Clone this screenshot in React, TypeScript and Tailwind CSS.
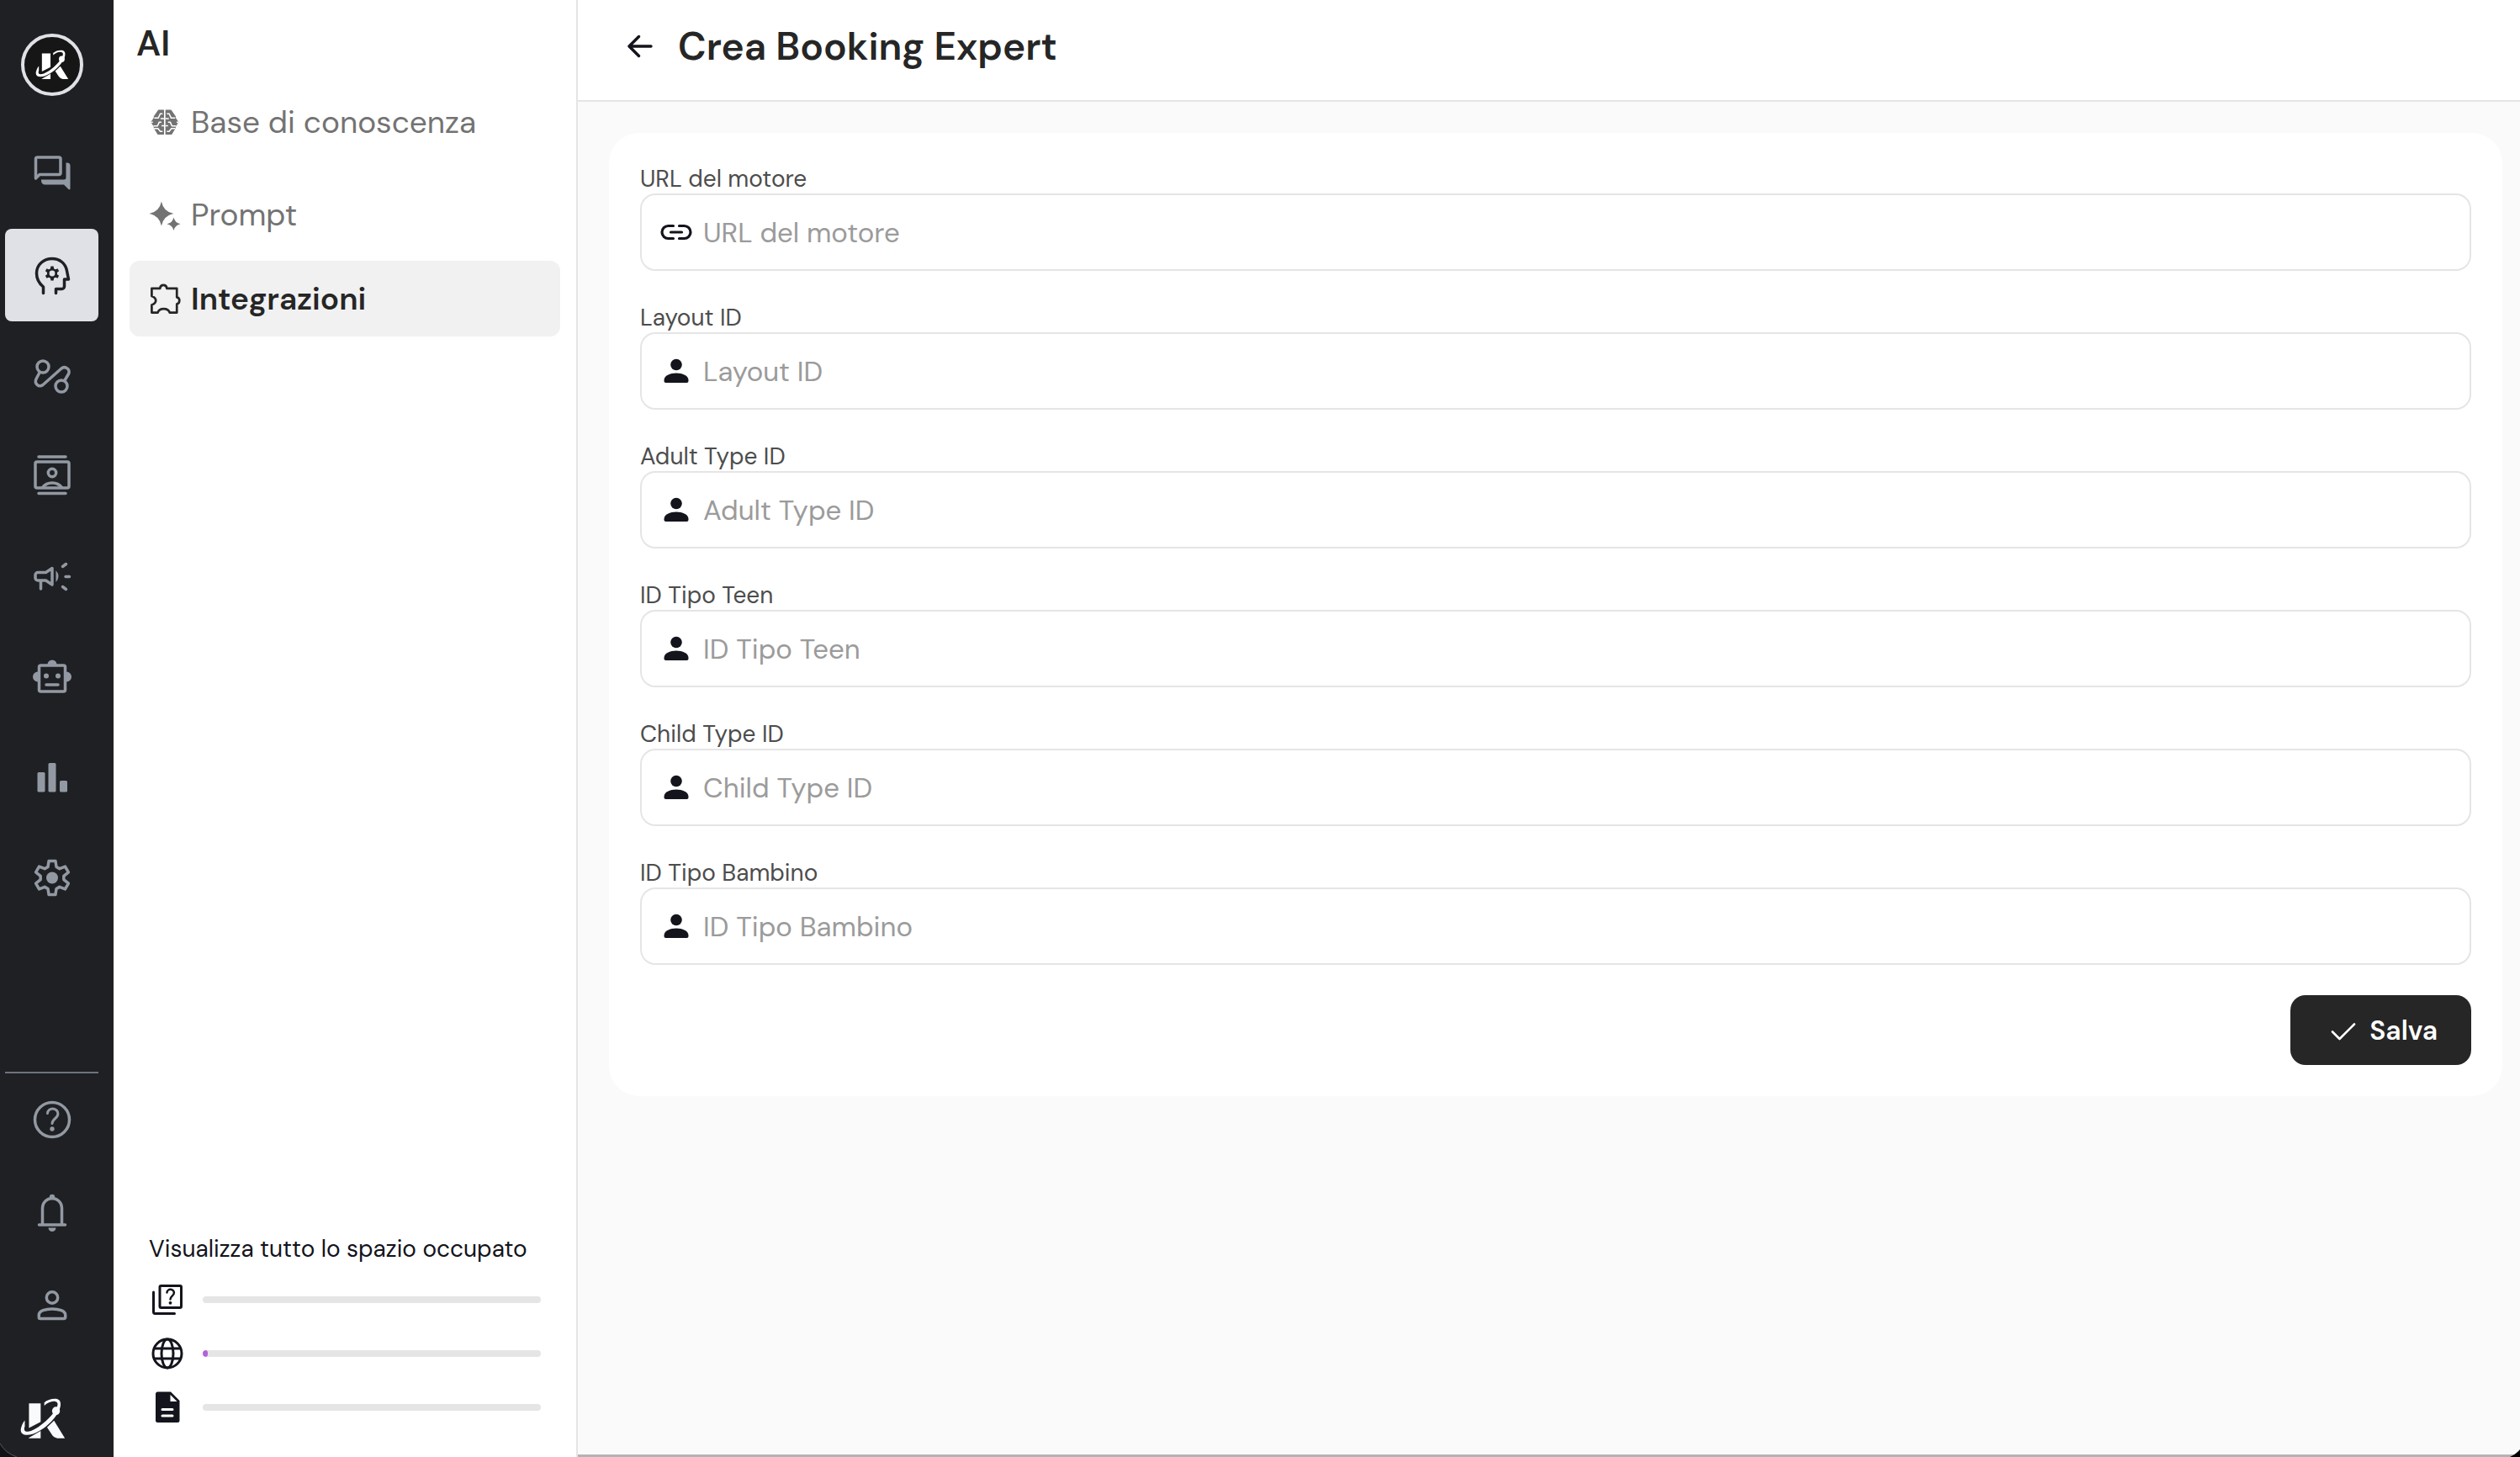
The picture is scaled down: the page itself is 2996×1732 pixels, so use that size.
import React, { useState } from "react";

type Art = { children: React.ReactNode };

/* Outline of a six-toothed cog centred on (cx, cy). */
function cogPath(cx: number, cy: number, outer: number, inner: number) {
  const points: string[] = [];
  for (let i = 0; i < 6; i++) {
    const mid = i * 60 - 90;
    const corners: [number, number][] = [
      [inner, mid - 21],
      [outer, mid - 11],
      [outer, mid + 11],
      [inner, mid + 21],
    ];
    for (const [radius, degrees] of corners) {
      const angle = (degrees * Math.PI) / 180;
      points.push(`${(cx + radius * Math.cos(angle)).toFixed(2)} ${(cy + radius * Math.sin(angle)).toFixed(2)}`);
    }
  }
  return `M${points.join("L")}Z`;
}

function RailIcon({ children }: Art) {
  return (
    <svg
      viewBox="0 0 56 56"
      className="size-14"
      fill="none"
      stroke="currentColor"
      strokeWidth="3.5"
      strokeLinecap="round"
      strokeLinejoin="round"
      aria-hidden="true"
    >
      {children}
    </svg>
  );
}

const chatIcon = (
  <RailIcon>
    <path d="M8.5 33V10a2 2 0 0 1 2-2h25.500a2 2 0 0 1 2 2v16.500a2 2 0 0 1-2 2H13z" />
    <path d="M44.500 14.500H46a3.500 3.500 0 0 1 3.500 3.500V45c0 1.500-1 1.800-2 1L42 40.500H19.500a4.500 4.500 0 0 1-4.500-4.500v-1.500H42a2.500 2.500 0 0 0 2.500-2.500z" fill="currentColor" stroke="none" />
  </RailIcon>
);

const mindIcon = (
  <RailIcon>
    <path d="M17.500 49.500V42C12 37.500 9.500 32.500 9.500 26C9.500 15.500 18 8.500 28 8.500C37 8.500 43.500 14 45.300 22L47.500 33H42.500V41.500a3 3 0 0 1-3 3H32.500V49.500" />
    <path d={cogPath(28, 26, 8.6, 5.8)} fill="currentColor" stroke="none" />
    <circle cx="28" cy="26" r="6" fill="currentColor" stroke="none" />
    <circle cx="28" cy="26" r="3.400" fill="#dfe1e6" stroke="none" />
  </RailIcon>
);

const routeIcon = (
  <RailIcon>
    <circle cx="17" cy="17" r="7" />
    <circle cx="39" cy="40" r="7" />
    <path d="M13 24L9 31.500C6.500 37 12 42 17 38.500L39 19C43.500 15.500 50 20 47.500 25.500L43 33" />
  </RailIcon>
);

const contactsIcon = (
  <RailIcon>
    <path d="M12 4H44M12 47.500H44" />
    <rect x="8" y="10" width="40" height="31" rx="2" />
    <circle cx="28" cy="23" r="4.700" />
    <path d="M16.500 40.500c5.500-7.500 17.500-7.500 23 0" />
  </RailIcon>
);

const campaignIcon = (
  <RailIcon>
    <path d="M20.500 21.500H11a3 3 0 0 0-3 3v3.500a3 3 0 0 0 3 3h9.500l7.500 5V16.500z" />
    <path d="M14.500 32V41" />
    <path d="M32.500 19q6 7 0 14z" fill="currentColor" stroke="none" />
    <path d="M40.500 14.500L44.500 11.500M44 26.500H48.500M40.500 38.500L44.500 41.500" />
  </RailIcon>
);

const botIcon = (
  <RailIcon>
    <path d="M22.500 11a5.500 5.500 0 0 1 11 0zM11 19.500a5.800 5.800 0 0 0 0 12zM45 19.500a5.800 5.800 0 0 1 0 12z" fill="currentColor" stroke="none" />
    <rect x="12.500" y="12" width="31" height="31" rx="2" />
    <circle cx="21" cy="24.500" r="3" fill="currentColor" stroke="none" />
    <circle cx="35" cy="24.500" r="3" fill="currentColor" stroke="none" />
    <path d="M21 35H35" />
  </RailIcon>
);

const chartIcon = (
  <RailIcon>
    <g fill="currentColor" stroke="none">
      <rect x="10.500" y="19" width="9" height="23.500" rx="1.500" />
      <rect x="23.500" y="8" width="9" height="34.500" rx="1.500" />
      <rect x="37" y="29" width="9" height="13.500" rx="1.500" />
    </g>
  </RailIcon>
);

const gearIcon = (
  <RailIcon>
    <path d={cogPath(28, 24.5, 20.5, 14)} />
    <circle cx="28" cy="24.500" r="7" fill="currentColor" stroke="none" />
  </RailIcon>
);

const helpIcon = (
  <RailIcon>
    <circle cx="28" cy="28" r="20.500" />
    <path d="M22.500 20.500a6.200 5.800 0 0 1 12.400 0.500c0 5.500-6.900 6-6.900 11.500" strokeWidth="3" />
    <circle cx="28" cy="39" r="2.700" fill="currentColor" stroke="none" />
  </RailIcon>
);

const bellIcon = (
  <RailIcon>
    <path d="M12.500 43H43.500M16.500 43V23a11.500 11.500 0 0 1 23 0V43" />
    <circle cx="28" cy="10" r="3.200" fill="currentColor" stroke="none" />
    <path d="M23.500 46.500h9a4.500 4.500 0 0 1-9 0z" fill="currentColor" stroke="none" />
  </RailIcon>
);

const userIcon = (
  <RailIcon>
    <circle cx="28" cy="19.500" r="6.700" />
    <path d="M12.300 40C12.300 30.500 43.700 30.500 43.700 40v3a1.500 1.500 0 0 1-1.500 1.500H13.800a1.500 1.500 0 0 1-1.500-1.500z" />
  </RailIcon>
);

/* Brand mark: a K crossed by an orbiting ring. */
function BrandMark({ className }: { className: string }) {
  return (
    <svg viewBox="74 66 162 148" className={className} fill="currentColor" aria-hidden="true">
      <path d="M105 85H147V151L105 173ZM104 209L147 184V210H104Z" />
      <path d="M170 171L195 147L234 210H207Q194 208 187 197Z" />
      <path d="M160 93V82C172 71 194 66 208 70C222 75 220 94 214 108C198 146 152 184 118 195C88 204 70 194 77 172C80 161 84 152 90 146V168C84 184 92 191 114 183C146 170 186 134 203 104C211 88 209 80 199 78C185 76 172 83 160 93Z" />
      <ellipse cx="202" cy="112" rx="14" ry="15" />
    </svg>
  );
}

function BrainIcon() {
  const lobe = (
    <>
      <path d="M103 67H83L67 90V95L57 110L67 127V131L81 154H103Z" fill="currentColor" />
      <path d="M69 96H83L90 81H98M58 111H64M103 98H91M66 124H80L86 111H94M68 133H82L90 143H98M103 123H94" fill="none" stroke="#fff" strokeWidth="4.500" />
    </>
  );
  return (
    <svg viewBox="50 54 112 112" className="size-[38px]" aria-hidden="true">
      {lobe}
      <g transform="matrix(-1 0 0 1 211 0)">{lobe}</g>
    </svg>
  );
}

function SparklesIcon() {
  return (
    <svg viewBox="50 377 112 112" className="size-[38px]" fill="currentColor" aria-hidden="true">
      <path d="M94 387Q101 423 137 430Q101 437 94 473Q87 437 51 430Q87 423 94 387Z" />
      <path d="M137 443Q141 462 161 466Q141 470 137 489Q133 470 113 466Q133 462 137 443Z" />
    </svg>
  );
}

function PuzzleIcon() {
  return (
    <svg viewBox="50 681 112 112" className="size-[38px]" fill="none" stroke="currentColor" strokeWidth="8" strokeLinejoin="round" aria-hidden="true">
      <path d="M60 701H89C91 686 111 686 113 701H148V732C160 734 160 754 148 756V786H123C118 768 86 768 81 786H60V759C79 752 79 735 60 728Z" />
    </svg>
  );
}

function LinkIcon() {
  return (
    <svg viewBox="0 0 38 38" className="size-[38px] shrink-0" fill="none" stroke="currentColor" strokeWidth="3.2" strokeLinecap="round" aria-hidden="true">
      <path d="M15.500 11.500H9.500a7.500 7.500 0 0 0 0 15H15.500M22.500 11.500H28.500a7.500 7.500 0 0 1 0 15H22.500M12.500 19H25.500" />
    </svg>
  );
}

function PersonIcon() {
  return (
    <svg viewBox="0 0 38 38" className="size-[38px] shrink-0" fill="currentColor" aria-hidden="true">
      <circle cx="19" cy="11.500" r="6.800" />
      <path d="M4.500 30C4.500 18.500 33.500 18.500 33.500 30V31a2 2 0 0 1-2 2H6.500a2 2 0 0 1-2-2Z" />
    </svg>
  );
}

function StorageIcon({ children }: Art) {
  return (
    <svg viewBox="0 0 44 40" className="h-10 w-11 shrink-0" fill="none" stroke="currentColor" strokeWidth="3" strokeLinecap="round" strokeLinejoin="round" aria-hidden="true">
      {children}
    </svg>
  );
}

const railLinks = [
  { label: "Chat", icon: chatIcon },
  { label: "AI", icon: mindIcon, active: true },
  { label: "Flussi", icon: routeIcon },
  { label: "Contatti", icon: contactsIcon },
  { label: "Campagne", icon: campaignIcon },
  { label: "Bot", icon: botIcon },
  { label: "Statistiche", icon: chartIcon },
  { label: "Impostazioni", icon: gearIcon },
];

const railFooter = [
  { label: "Aiuto", icon: helpIcon },
  { label: "Notifiche", icon: bellIcon },
  { label: "Profilo", icon: userIcon },
];

const storage = [
  {
    label: "Domande",
    percent: 0,
    icon: (
      <StorageIcon>
        <rect x="13" y="3.500" width="25.500" height="26" rx="1.500" />
        <path d="M5.500 11V34.500a2 2 0 0 0 2 2H30.500" />
        <path d="M21.500 11.500a4.200 3.800 0 0 1 8.400 0.300c0 3.700-4.400 4-4.400 7.700" strokeWidth="2.500" />
        <circle cx="25.500" cy="23.800" r="1.900" fill="currentColor" stroke="none" />
      </StorageIcon>
    ),
  },
  {
    label: "Siti web",
    percent: 1.5,
    icon: (
      <StorageIcon>
        <circle cx="22" cy="20" r="17" />
        <ellipse cx="22" cy="20" rx="7" ry="17" />
        <path d="M6.500 14H37.500M6.500 26H37.500" />
      </StorageIcon>
    ),
  },
  {
    label: "Documenti",
    percent: 0,
    icon: (
      <StorageIcon>
        <path d="M11 1.500H26L36.500 12V35.500a2.500 2.500 0 0 1-2.500 2.500H10.500a2.500 2.500 0 0 1-2.500-2.500V4a2.500 2.500 0 0 1 3-2.500Z" fill="currentColor" stroke="none" />
        <path d="M25.500 5V13H33.500Z" fill="#fff" stroke="none" />
        <path d="M16 22.500H28M16 30H28" stroke="#fff" />
      </StorageIcon>
    ),
  },
];

const fields = [
  { id: "engine-url", label: "URL del motore", icon: <LinkIcon /> },
  { id: "layout-id", label: "Layout ID", icon: <PersonIcon /> },
  { id: "adult-type-id", label: "Adult Type ID", icon: <PersonIcon /> },
  { id: "teen-type-id", label: "ID Tipo Teen", icon: <PersonIcon /> },
  { id: "child-type-id", label: "Child Type ID", icon: <PersonIcon /> },
  { id: "infant-type-id", label: "ID Tipo Bambino", icon: <PersonIcon /> },
];

function Rail() {
  return (
    <nav aria-label="Principale" className="flex w-[135px] shrink-0 flex-col bg-[#1e2024] pr-[18px] pl-1.5 text-[#9399a2]">
      <a href="#home" aria-label="Home" className="mx-auto mt-10 flex size-[74px] items-center justify-center rounded-full border-4 border-[#dfe1e6] bg-[#161617] text-white">
        <BrandMark className="h-9 w-10" />
      </a>
      <div className="mt-[38px] flex flex-col gap-2.5">
        {railLinks.map((item) => (
          <a
            key={item.label}
            href={`#${item.label.toLowerCase()}`}
            aria-label={item.label}
            className={
              item.active
                ? "flex h-[110px] items-center justify-center rounded-lg bg-[#dfe1e6] text-[#1e2024]"
                : "flex h-[110px] items-center justify-center rounded-lg"
            }
          >
            {item.icon}
          </a>
        ))}
      </div>
      <div className="mt-auto flex flex-col border-t-2 border-[#6d737c]">
        {railFooter.map((item) => (
          <a key={item.label} href={`#${item.label.toLowerCase()}`} aria-label={item.label} className="flex h-[110px] items-center justify-center">
            {item.icon}
          </a>
        ))}
      </div>
      <div className="flex h-[126px] items-end pb-[21px] pl-[18px] text-[#f8fafc]">
        <BrandMark className="h-[49px] w-[54px]" />
      </div>
    </nav>
  );
}

function Sidebar() {
  return (
    <aside className="flex w-[552px] shrink-0 flex-col border-r-2 border-[#e5e5e5] bg-white">
      <h2 className="mt-6 pl-[27px] text-[42px]/14 font-semibold text-[#262626]">AI</h2>
      <nav aria-label="AI" className="mt-5 flex flex-col px-[19px] text-[37px]/[90px] text-[#737373]">
        <a href="#base" className="mb-5 flex items-center gap-3 pl-[23px]">
          <BrainIcon />
          Base di conoscenza
        </a>
        <a href="#prompt" className="mb-2.5 flex items-center gap-3 pl-[23px]">
          <SparklesIcon />
          Prompt
        </a>
        <a href="#integrazioni" aria-current="page" className="flex items-center gap-3 rounded-xl bg-[#f1f1f1] pl-[23px] font-semibold text-[#262626]">
          <PuzzleIcon />
          Integrazioni
        </a>
      </nav>
      <section className="mt-auto px-[42px] pb-[39px] text-[#13141c]">
        <h3 className="text-[28px]/9">Visualizza tutto lo spazio occupato</h3>
        <ul className="mt-[22px] flex flex-col gap-6">
          {storage.map((row) => (
            <li key={row.label} className="flex items-center gap-5">
              {row.icon}
              <div role="progressbar" aria-label={row.label} aria-valuenow={row.percent} className="h-2 flex-1 overflow-hidden rounded-full bg-[#e5e5e5]">
                <div className="h-full rounded-full bg-[#b362d9]" style={{ width: `${row.percent}%` }} />
              </div>
            </li>
          ))}
        </ul>
      </section>
    </aside>
  );
}

export default function App() {
  const [values, setValues] = useState<Record<string, string>>({});

  return (
    <div className="relative flex min-h-screen overflow-hidden bg-white font-['DM_Sans',Inter,sans-serif]">
      <Rail />
      <Sidebar />
      <main className="flex min-w-0 flex-1 flex-col bg-[#fafafa]">
        <header className="flex h-[121px] items-start gap-6 border-b-2 border-[#e5e5e5] bg-white pt-[27px] pl-[53px] text-[#262626]">
          <button type="button" aria-label="Indietro" className="flex h-14 w-[42px] items-center justify-center text-[#13141c]">
            <svg viewBox="0 0 40 40" className="size-10" fill="none" stroke="currentColor" strokeWidth="3.4" strokeLinecap="round" strokeLinejoin="round" aria-hidden="true">
              <path d="M33 20H7.500M18.500 8.500L7 20L18.500 31.500" />
            </svg>
          </button>
          <h1 className="text-[46px]/14 font-semibold">Crea Booking Expert</h1>
        </header>
        <form
          className="mt-[37px] mr-[21px] ml-[37px] flex flex-col rounded-[36px] bg-white px-[37px] py-[37px]"
          onSubmit={(event) => event.preventDefault()}
        >
          <div className="flex flex-col gap-[38px]">
            {fields.map((field) => (
              <div key={field.id} className="flex flex-col">
                <label htmlFor={field.id} className="text-[28px]/[35px] text-[#4d4d4d]">
                  {field.label}
                </label>
                <div className="flex h-[92px] items-center gap-[13px] rounded-[18px] border-2 border-[#e5e5e5] bg-white pl-[22px] text-[#13141c]">
                  {field.icon}
                  <input
                    id={field.id}
                    type="text"
                    value={values[field.id] ?? ""}
                    onChange={(event) => setValues({ ...values, [field.id]: event.target.value })}
                    placeholder={field.label}
                    className="h-full min-w-0 flex-1 bg-transparent text-[33px] outline-none placeholder:text-[#9b9b9b]"
                  />
                </div>
              </div>
            ))}
          </div>
          <button type="submit" className="mt-9 flex h-[83px] items-center gap-2.5 self-end rounded-[18px] bg-[#262626] px-10 text-[32px] font-semibold text-white">
            <svg viewBox="0 0 44 44" className="size-11" fill="none" stroke="currentColor" strokeWidth="2.600" strokeLinecap="round" strokeLinejoin="round" aria-hidden="true">
              <path d="M10 23.500L18.500 32L36 14.500" />
            </svg>
            Salva
          </button>
        </form>
        <div className="mt-auto h-[3px] bg-[#b3b3b3]" />
      </main>
      <svg viewBox="0 0 20 16" className="absolute bottom-0 left-0 h-4 w-5" aria-hidden="true">
        <path d="M0 0Q6 11 20 16H0Z" fill="#111214" />
        <path d="M0 0Q6 11 20 16" fill="none" stroke="#55585d" />
      </svg>
      <svg viewBox="0 0 12 9" className="absolute right-0 bottom-0 h-[9px] w-3" aria-hidden="true">
        <path d="M12 0Q8 5 0 9H12Z" fill="#000" />
      </svg>
    </div>
  );
}
